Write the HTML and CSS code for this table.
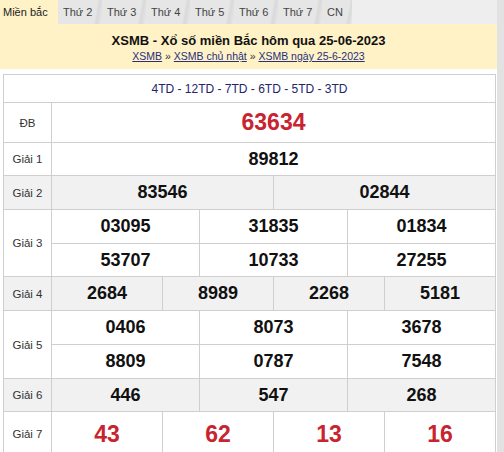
FILE: index.html
```html
<!DOCTYPE html>
<html lang="vi">
<head>
<meta charset="utf-8">
<link rel="stylesheet" href="styles.css">
</head>
<body>
<div class="page">
  <nav class="tabs">
    <span class="tab active">Miền bắc</span>
    <span class="tab">Thứ 2</span>
    <span class="tab">Thứ 3</span>
    <span class="tab">Thứ 4</span>
    <span class="tab">Thứ 5</span>
    <span class="tab">Thứ 6</span>
    <span class="tab">Thứ 7</span>
    <span class="tab">CN</span>
  </nav>
  <header class="head">
    <h1 class="title">XSMB - Xổ số miền Bắc hôm qua 25-06-2023</h1>
    <div class="crumbs"><a href="#">XSMB</a> » <a href="#">XSMB chủ nhật</a> » <a href="#">XSMB ngày 25-6-2023</a></div>
  </header>
  <div class="content">
    <table class="kq">
      <colgroup>
        <col class="c-label">
        <col><col><col><col><col><col><col><col><col><col><col><col>
      </colgroup>
      <tr class="r-td"><td colspan="13" class="td-codes">4TD - 12TD - 7TD - 6TD - 5TD - 3TD</td></tr>
      <tr class="r-db"><td class="lbl">ĐB</td><td colspan="12" class="num red big">63634</td></tr>
      <tr class="r s"><td class="lbl">Giải 1</td><td colspan="12" class="num">89812</td></tr>
      <tr class="r alt"><td class="lbl">Giải 2</td><td colspan="6" class="num">83546</td><td colspan="6" class="num">02844</td></tr>
      <tr class="r"><td class="lbl" rowspan="2">Giải 3</td><td colspan="4" class="num">03095</td><td colspan="4" class="num">31835</td><td colspan="4" class="num">01834</td></tr>
      <tr class="r s"><td colspan="4" class="num">53707</td><td colspan="4" class="num">10733</td><td colspan="4" class="num">27255</td></tr>
      <tr class="r alt"><td class="lbl">Giải 4</td><td colspan="3" class="num">2684</td><td colspan="3" class="num">8989</td><td colspan="3" class="num">2268</td><td colspan="3" class="num">5181</td></tr>
      <tr class="r"><td class="lbl" rowspan="2">Giải 5</td><td colspan="4" class="num">0406</td><td colspan="4" class="num">8073</td><td colspan="4" class="num">3678</td></tr>
      <tr class="r"><td colspan="4" class="num">8809</td><td colspan="4" class="num">0787</td><td colspan="4" class="num">7548</td></tr>
      <tr class="r alt s"><td class="lbl">Giải 6</td><td colspan="4" class="num">446</td><td colspan="4" class="num">547</td><td colspan="4" class="num">268</td></tr>
      <tr class="r-g7"><td class="lbl">Giải 7</td><td colspan="3" class="num red big">43</td><td colspan="3" class="num red big">62</td><td colspan="3" class="num red big">13</td><td colspan="3" class="num red big">16</td></tr>
    </table>
  </div>
</div>
</body>
</html>
```

FILE: styles.css
```css
html, body {
  margin: 0;
  padding: 0;
}
body {
  background: #e2e2e2;
  font-family: "Liberation Sans", Arial, sans-serif;
  color: #111;
}
.page {
  width: 497px;
  height: 452px;
  background: #fff;
  overflow: hidden;
}
.tabs {
  display: flex;
  height: 24px;
  background: #eeeeee;
}
.tab {
  display: block;
  width: 44px;
  box-sizing: border-box;
  padding-left: 5px;
  font-size: 11px;
  line-height: 25px;
  color: #444;
  background: linear-gradient(100deg, #e6e6e6 0, #e6e6e6 82%, #d9d9d9 88%, #e9e9e9 100%);
}
.tab.active {
  width: 58px;
  padding-left: 3px;
  color: #222;
  background: #fff2c6;
}
.tab:last-child {
  width: 30px;
}
.head {
  height: 45px;
  box-sizing: border-box;
  padding-top: 9px;
  background: #fff2c6;
  text-align: center;
}
.title {
  margin: 0;
  font-size: 13px;
  line-height: 16px;
  font-weight: bold;
  color: #111;
}
.crumbs {
  font-size: 10.5px;
  line-height: 14px;
  color: #333;
}
.crumbs a {
  color: #27307a;
  text-decoration: underline;
}
.content {
  padding: 5px 0 0 3px;
}
.kq {
  width: 493px;
  table-layout: fixed;
  border-collapse: collapse;
}
.c-label {
  width: 48px;
}
.kq td {
  border: 1px solid #cfcfcf;
  padding: 0;
  text-align: center;
}
.td-codes {
  height: 27px;
  font-size: 12px;
  color: #23236e;
}
.lbl {
  font-size: 11.5px;
  color: #333;
}
.num {
  font-size: 18px;
  font-weight: bold;
  color: #111;
}
.num.big {
  font-size: 23px;
}
.red {
  color: #c8242f;
}
.r-db td {
  height: 39px;
}
.r td {
  height: 33px;
}
.r.s td {
  height: 32px;
}
.alt td {
  background: #f1f1f1;
}
.r-g7 td {
  height: 44px;
}
```
